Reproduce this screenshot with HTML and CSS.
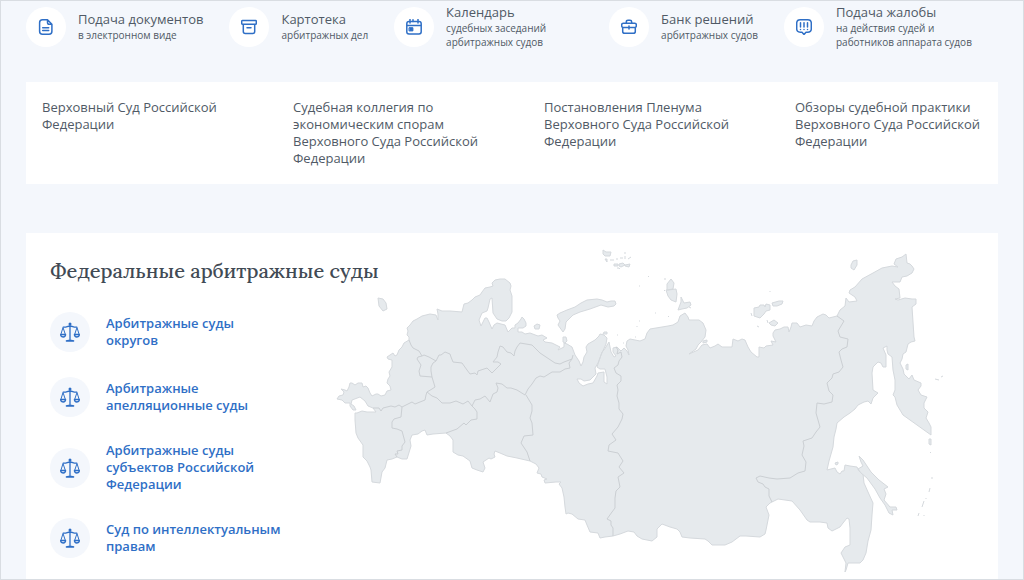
FILE: index.html
```html
<!DOCTYPE html>
<html lang="ru">
<head>
<meta charset="utf-8">
<meta name="viewport" content="width=device-width, initial-scale=1">
<title>Федеральные арбитражные суды</title>
<link rel="stylesheet" href="styles.css">
</head>
<body>
<svg class="defs" aria-hidden="true">
  <symbol id="scales" viewBox="0 0 20 20">
    <g fill="none" stroke="currentColor" stroke-width="1.3" stroke-linejoin="round">
      <path d="M10 1v18M5.800 18.800h8.400M2.800 5.200h1.600c2.400 0 3.200-1.200 5.600-1.200s3.200 1.200 5.600 1.200h1.600"/>
      <path d="M3 5.500L.9 12.300M3 5.500l2.300 6.800M17 5.500l-2.300 6.800M17 5.500l2.100 6.800" stroke-width="1"/>
      <path d="M.6 12.500h5c0 3.300-5 3.300-5 0zM14.400 12.500h5c0 3.300-5 3.300-5 0z"/>
    </g>
    <circle cx="10" cy="2" r="1.500" fill="currentColor"/>
    <path d="M6 19.500c0-1.600 2-1.800 4-1.800s4 .2 4 1.800z" fill="currentColor"/>
  </symbol>
</svg>
<div class="page">
  <nav class="services" aria-label="Сервисы">
    <a class="service" href="#">
      <span class="badge badge-light"><svg class="glyph" viewBox="0 0 16 16"><path d="M9.500 .8H4.500C2.600.8 1.600 1.800 1.600 3.800v8.400c0 2 1 3 2.900 3h6.500c2 0 2.900-1 2.900-3V5.200zM9.500 .8v2.600c0 1.300.6 1.800 1.800 1.800h2.600M4.700 8.700h6M4.700 11.600h6"/></svg></span>
      <span class="service-text"><span class="service-title">Подача документов</span><span class="service-note">в электронном виде</span></span>
    </a>
    <a class="service" href="#">
      <span class="badge badge-light"><svg class="glyph" viewBox="0 0 16 16"><path d="M1.400 1.500h13.200q.7 0 .7.700v2.300q0 .7-.7.700H1.400q-.7 0-.7-.7V2.200q0-.7.7-.7zM2.300 5.200v7.400q0 2 2 2h7.400q2 0 2-2V5.200M6 8.700h4"/></svg></span>
      <span class="service-text"><span class="service-title">Картотека</span><span class="service-note">арбитражных дел</span></span>
    </a>
    <a class="service" href="#">
      <span class="badge badge-light"><svg class="glyph" viewBox="0 0 16 16"><path d="M3 2.500h10q2.200 0 2.200 2.200v8q0 2.200-2.200 2.200H3Q.8 14.900.8 12.700v-8Q.8 2.500 3 2.500zM1 6.500h14M4 .5v3.500M12 .5v3.500M7 .8v2"/><path d="M3.400 8.700h3.500v3.200H3.400z" fill="currentColor" stroke-width="1"/></svg></span>
      <span class="service-text"><span class="service-title">Календарь</span><span class="service-note">судебных заседаний арбитражных судов</span></span>
    </a>
    <a class="service" href="#">
      <span class="badge badge-light"><svg class="glyph" viewBox="0 0 16 16"><path d="M2.200 4.200h11.600q1.500 0 1.500 1.500v1.200q0 1.500-1.500 1.500H2.200Q.7 8.400.7 6.900V5.700q0-1.500 1.500-1.500zM1.700 8.400v4q0 1.900 2 1.900h8.600q2 0 2-1.900v-4M5.300 4V2.900q0-1.700 1.700-1.700h2q1.700 0 1.700 1.700V4M8 7v3"/></svg></span>
      <span class="service-text"><span class="service-title">Банк решений</span><span class="service-note">арбитражных судов</span></span>
    </a>
    <a class="service" href="#">
      <span class="badge badge-light"><svg class="glyph" viewBox="0 0 16 16"><path d="M4.200 .8h7.600q3.500 0 3.500 3.500v5.400q0 3.500-3.500 3.500H10L8 15.400 6 13.200H4.200Q.7 13.200.7 9.700V4.300Q.7.8 4.200.8z"/><path d="M4.500 3.700v4.300M8 3.700v4.300M11.500 3.700v4.300M4.500 10.400v.2M8 10.400v.2M11.500 10.400v.2"/></svg></span>
      <span class="service-text"><span class="service-title">Подача жалобы</span><span class="service-note">на действия судей и работников аппарата судов</span></span>
    </a>
  </nav>

  <nav class="card practice" aria-label="Судебная практика">
    <a href="#">Верховный Суд Российской Федерации</a>
    <a href="#">Судебная коллегия по экономическим спорам Верховного Суда Российской Федерации</a>
    <a href="#">Постановления Пленума Верховного Суда Российской Федерации</a>
    <a href="#">Обзоры судебной практики Верховного Суда Российской Федерации</a>
  </nav>

  <section class="card courts">
    <h2 class="courts-title">Федеральные арбитражные суды</h2>
    <ul class="court-list">
      <li><a class="court" href="#"><span class="badge badge-tint"><svg class="scales"><use href="#scales"/></svg></span><span>Арбитражные суды округов</span></a></li>
      <li><a class="court" href="#"><span class="badge badge-tint"><svg class="scales"><use href="#scales"/></svg></span><span>Арбитражные апелляционные суды</span></a></li>
      <li><a class="court" href="#"><span class="badge badge-tint"><svg class="scales"><use href="#scales"/></svg></span><span>Арбитражные суды субъектов Российской Федерации</span></a></li>
      <li><a class="court" href="#"><span class="badge badge-tint"><svg class="scales"><use href="#scales"/></svg></span><span>Суд по интеллектуальным правам</span></a></li>
    </ul>
    <svg class="map" viewBox="330 245 644 330" role="img" aria-label="Карта судебных округов">
      <g class="land">
        <path d="M337 399 339 396 343 395 344 392 341 389 345 390 347 391 349 387 350 383 352 383 355 385 358 383 362 383 363 387 366 386 368 388 370 393 372 396 376 394 378 394 381 396 385 395 387 391 391 390 390 386 387 383 388 379 390 376 389 372 392 367 392 360 388 359 387 357 393 353 395 356 397 355 399 350 402 347 404 343 409 340 409 337 407 335 408 331 407 328 410 325 413 321 417 319 422 316 426 315 430 314 436 315 438 320 438 314 437 309 442 311 450 311 462 312 463 308 464 304 468 303 472 300 475 297 480 295 482 292 485 288 490 287 493 286 492 283 495 280 500 279 505 279 510 283 511 286 510 290 512 296 512 312 509 318 506 321 502 321 497 319 493 313 492 298 490 299 488 308 487 311 482 313 479 320 481 326 483 322 485 318 487 318 489 322 492 329 494 325 497 323 505 325 508 332 512 328 515 328 515 325 518 323 521 319 522 317 524 319 526 323 526 326 523 328 518 328 518 332 522 332 525 334 530 333 538 336 542 335 547 338 543 340 545 342 552 343 560 347 558 350 564 347 564 343 567 344 572 347 575 355 579 361 581 366 583 362 584 357 587 352 586 347 588 344 595 340 599 336 600 334 604 335 607 338 606 344 601 355 598 363 595 368 596 374 590 380 584 381 581 379 577 379 579 383 583 386 588 384 593 383 597 376 598 373 604 372 604 382 607 384 607 377 605 369 600 369 597 367 600 358 602 352 604 350 609 342 610 347 611 352 614 357 616 356 613 352 613 348 617 347 621 351 624 348 627 351 629 355 628 350 626 346 627 341 630 339 640 341 645 339 647 333 650 329 656 328 662 327 668 326 673 325 678 322 680 316 685 313 688 317 689 320 695 320 699 320 703 323 706 330 705 337 701 342 698 345 696 349 689 354 698 350 702 345 707 344 710 348 715 346 718 344 722 347 732 347 733 339 738 341 742 339 745 340 748 347 751 352 757 357 759 357 759 347 764 348 766 346 773 345 771 341 776 342 773 336 773 333 775 330 780 329 784 327 788 327 789 332 791 327 792 323 797 323 800 327 806 325 812 326 814 321 817 317 823 314 826 315 829 318 837 316 840 310 845 306 846 298 849 302 857 301 855 297 849 293 850 290 855 287 862 279 873 273 882 268 892 266 898 267 894 264 896 259 902 257 906 254 907 263 910 264 912 266 914 269 912 273 907 276 902 277 900 282 892 282 895 286 899 289 900 298 895 299 898 300 905 298 912 299 916 299 916 304 912 307 913 322 914 337 915 341 911 342 908 344 906 352 903 354 902 359 900 363 903 369 904 374 909 379 912 375 914 380 921 383 921 386 918 390 921 395 927 397 924 403 924 408 928 412 926 418 929 423 931 427 931 435 917 425 903 415 897 405 895 397 893 395 895 390 895 380 893 370 892 357 888 354 887 350 887 346 885 347 883 348 886 355 886 367 883 367 881 363 878 362 873 367 872 373 873 390 878 393 873 398 871 404 868 401 864 402 858 405 855 409 850 413 844 417 837 423 836 429 834 437 833 447 829 461 827 470 831 469 835 468 837 472 840 474 842 471 844 471 845 465 850 466 857 467 859 471 863 474 864 483 868 492 873 503 872 515 871 530 868 541 866 553 863 560 860 563 848 563 846 570 845 572 846 563 843 557 841 553 845 547 850 545 850 528 849 519 847 518 843 523 840 527 832 531 828 528 827 523 820 522 810 522 807 520 800 510 792 501 778 499 770 503 766 507 769 515 766 530 765 534 760 537 746 536 740 536 736 539 732 542 725 545 712 545 708 541 705 539 690 538 682 537 680 532 677 529 670 527 662 524 657 529 657 537 652 541 642 539 637 536 634 532 628 531 620 534 613 536 605 537 600 538 598 533 590 532 587 525 585 520 578 519 572 514 568 513 566 514 565 507 564 497 562 488 559 484 561 482 556 482 545 483 544 480 547 479 542 477 541 474 537 473 539 468 536 464 530 461 517 458 507 456 500 453 495 451 494 454 495 457 491 459 489 458 483 462 485 468 483 472 477 470 472 468 470 461 463 456 458 455 453 452 453 440 450 436 446 433 433 434 427 435 425 430 422 431 418 434 412 435 410 440 411 446 407 459 402 459 397 457 392 459 387 460 385 468 382 472 380 483 372 482 371 470 370 467 367 461 363 457 363 445 358 438 356 433 355 420 355 413 357 413 362 411 367 412 376 412 373 408 368 406 365 401 360 397 352 400 351 404 354 406 356 410 353 410 350 406 350 403 345 403 342 400z"/>
        <path d="M378 298l5 1 3 4 1 6-4 2-4-5zM557 315 560 313 567 310 575 307 581 303 587 300 597 299 602 300 607 302 611 301 615 301 616 304 614 306 608 307 601 305 590 309 580 312 573 315 566 322 565 329 563 332 558 325 560 321 558 318zM534 326l3-2 3 1-1 4-4 0zM563 337l3 0 1 4-2 2-2-1zM604 332l3 0 0 2-4 0z"/>
        <path d="M603 250l3 2 5 0-1 4-5 0-2-2zM605 259l2 0 0 3zM610 260l4 0m2-1l2 0m2-1l3 0m2-2l0 3m-1-6l2 0M614 264l4 0 0 2-4 0zM619 264l4-1 2 2-4 2-2-1zM625 265l5-1-1 3-4-1zM617 268l2 0 1 1M628 259l3-2"/>
        <path d="M664 279l2 0M667 284l4-5 3 4-1 6-6 1zM666 290l2 0 8-1 1 5-1 8-5-2-3-4zM681 297l3 6 6-1 1 3-4 3-5 1-4 1 3-8zM664 290l1 1M689 307l2 1M668 317l1-1M648 276l1 1M639 286l1 0M655 313l1 0M639 321l1 0M637 326l0 1M635 337h1M617 335h1M623 343h1M703 341l4-1 0 2-4 1z"/>
        <path d="M754 308l5-1 1-2 4 0 1 2 1-3 4 1 0 5-4 1-2 3-4 4-6-2zM772 303l7-2 4 0-1 3-5 2-4 0zM769 323l5-3 4 3-3 3-4-1zM767 320l1 3M751 313l1 3M757 326l2 1M770 291v1M851 265l2-4 4-1 0 5-3 5-3-2zM906 365l2-1 0 6-2-1zM935 379l4 1M941 377l2-1"/>
        <path d="M859 456 863 460 867 466 871 472 879 480 888 487 884 489 886 494 884 500 890 507 896 507 897 510 892 510 893 515 889 513 885 505 880 498 875 489 867 478 861 473 858 469 863 466 861 462zM835 463l3-1 0 2-2 1zM929 439l2 0 0 6-2-1zM930 452l1 1M932 477l0 2M930 488l-1 4M926 498v1M924 501l-2 6M919 513l-1 3M924 515v1"/>
      </g>
      <g class="borders">
        <path d="M409 340 411 345 413 348 419 351 422 356 424 355 429 357 436 361 439 355 441 355 445 352 450 354 451 357 453 362 462 363 467 370 470 374 475 373 477 375 478 371 487 368 490 371 492 373 495 370 501 364 498 362 493 362 497 357 498 352 500 346 503 347 507 352 511 353 514 356 515 351 517 347 520 343 532 345 540 353 555 363 560 364 564 362 572 359 573 355"/>
        <path d="M422 356 418 357 417 359 421 365 419 371 420 376 432 377M436 361 433 363 431 367 431 371 432 377 435 387 432 389 427 392 426 395 425 400 415 404 412 402 402 407 399 405 395 407 391 406 383 408 381 411 379 408 373 408"/>
        <path d="M427 392 432 396 437 398 442 403 450 403 456 401 463 404 468 401 472 406 475 400 480 399 485 396 490 402 493 394 497 392 498 388 496 383 502 384 507 388 511 388 517 390 525 395 528 389 532 384 536 378 540 376 544 377 552 372 560 372 565 369 570 368 569 363 572 359M472 406 475 409 477 412 477 419 471 420 466 425 464 423 457 429 446 433"/>
        <path d="M402 407 401 417 394 419 392 422 392 428 397 429 402 431 405 442 402 446 402 450 397 451 398 454 395 454 397 457"/>
        <path d="M526 395 529 400 532 405 532 411 530 418 532 423 533 435 524 436 521 443 527 452 530 461"/>
        <path d="M616 347 618 350 617 354 621 352 622 357 619 361 618 365 614 368 616 373 621 376 621 381 617 385 618 390 617 396 619 403 619 409 623 414 622 419 618 427 612 434 616 440 609 445 608 451 618 453 623 461 619 467 624 473 618 477 620 487 616 491 615 498 615 508 612 512 607 519 611 521 611 525 613 528 613 536"/>
        <path d="M837 316 844 321 841 326 838 331 840 337 848 339 847 347 842 349 839 352 841 360 843 367 839 372 833 374 832 378 827 383 829 391 833 395 832 402 824 404 817 403 816 413 820 427 816 432 812 438 803 441 804 446 802 455 806 462 805 471 798 473 790 478 777 479 769 478 760 476 756 478 758 482 763 484 765 487 769 489 769 496 772 502"/>
      </g>
    </svg>
  </section>
</div>
</body>
</html>
```

FILE: styles.css
```css
* {
  box-sizing: border-box;
}

body {
  margin: 0;
  font-family: "Open Sans", "Noto Sans", sans-serif;
  font-size: 13px;
  line-height: 17px;
  color: #505a66;
}

a {
  color: inherit;
  text-decoration: none;
}

.defs {
  position: absolute;
  width: 0;
  height: 0;
}

.page {
  min-height: 100vh;
  padding: 3px 25px 0;
  border: 1px solid #d9dde2;
  background: #f4f7fc;
}

.services {
  display: flex;
  align-items: center;
  gap: 26px;
}

.service {
  display: flex;
  align-items: center;
  gap: 12px;
}

.service-text {
  max-width: 137px;
}

.service-title,
.service-note {
  display: block;
}

.service-title {
  white-space: nowrap;
}

.service-note {
  font-size: 10px;
  line-height: 14px;
}

.badge {
  display: flex;
  flex: none;
  align-items: center;
  justify-content: center;
  width: 40px;
  height: 40px;
  border-radius: 50%;
  color: #2f6fc6;
}

.badge-light {
  background: #fff;
}

.badge-tint {
  background: #f4f7fc;
}

.glyph {
  width: 16px;
  height: 16px;
  fill: none;
  stroke: currentColor;
  stroke-width: 1.5;
  stroke-linecap: round;
  stroke-linejoin: round;
}

.scales {
  width: 20px;
  height: 20px;
}

.card {
  background: #fff;
}

.practice {
  display: grid;
  grid-template-columns: repeat(4, 1fr);
  gap: 64px;
  margin-top: 33px;
  padding: 17px 16px;
}

.courts {
  display: grid;
  grid-template-columns: 280px 1fr;
  grid-template-rows: auto 1fr;
  margin-top: 49px;
  padding: 12px 24px 0;
}

.courts-title {
  grid-column: 1 / -1;
  grid-row: 1;
  margin: 0;
  padding-top: 12px;
  font: 500 20px/28px Lora, "Liberation Serif", serif;
  color: #414a54;
}

.court-list {
  display: grid;
  align-content: start;
  gap: 25px;
  margin: 0;
  padding: 27px 0 21px;
  list-style: none;
}

.court {
  display: flex;
  align-items: center;
  gap: 16px;
  max-width: 232px;
  color: #2f6fc6;
  font-weight: 600;
}

.map {
  grid-column: 2;
  grid-row: 1 / 3;
  width: 100%;
}

.land {
  fill: #e6eaed;
  stroke: #d5d9dd;
  stroke-width: 1;
  stroke-linejoin: round;
}

.borders {
  fill: none;
  stroke: #cbcfd3;
  stroke-width: 1;
  stroke-linejoin: round;
}
```
